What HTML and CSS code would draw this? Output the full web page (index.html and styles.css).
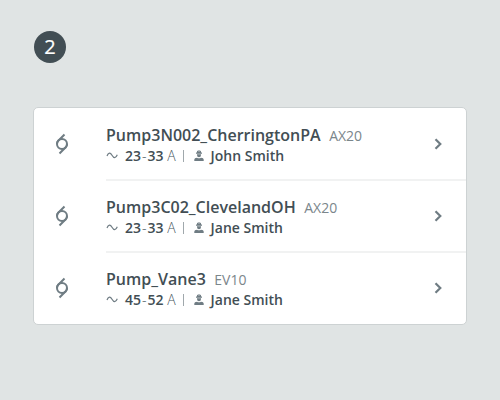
FILE: index.html
```html
<!DOCTYPE html>
<html lang="en">
<head>
<meta charset="utf-8">
<title>Pumps</title>
<link rel="stylesheet" href="styles.css">
</head>
<body>
<svg width="0" height="0" class="defs">
  <symbol id="pump" viewBox="0 0 24 24"><circle cx="12" cy="12" r="5"/><path d="M7 12Q7 10 8.300 8.700L14.500 2.500M17 12Q17 14 15.700 15.300L9.500 21.500"/></symbol>
  <symbol id="wave" viewBox="0 0 12 12"><path d="M1 6C2.300 2.200 4.300 2.200 6 5.200S9.700 8.800 11.300 4.800"/></symbol>
  <symbol id="user" viewBox="0 0 12 12"><path d="M4 1.200L5 .5V1.500H5.500V0H6.500V1.500H7V.5L8 1.200V2.500H9V3.700H3V2.500H4ZM4 4.200H8V5A2 2.200 0 0 1 4 5ZM1.300 11V9.500Q1.300 8 4 7.700Q6 9 8 7.700Q10.700 8 10.700 9.500V11Z"/></symbol>
  <symbol id="chev" viewBox="0 0 12 12"><path d="M3.500 1.200L8.300 6L3.500 10.800"/></symbol>
</svg>
<div class="step">2</div>
<ul class="list">
  <li class="row"><svg class="pump"><use href="#pump"/></svg><div class="body"><div class="info"><div class="title">Pump3N002_CherringtonPA<span class="model">AX20</span></div><div class="meta"><svg class="wave"><use href="#wave"/></svg><span class="range"><b>23</b><span class="dash">-</span><b>33</b> A</span><i class="bar"></i><svg class="user"><use href="#user"/></svg><span class="name">John Smith</span></div></div><svg class="chev"><use href="#chev"/></svg></div></li>
  <li class="row"><svg class="pump"><use href="#pump"/></svg><div class="body"><div class="info"><div class="title">Pump3C02_ClevelandOH<span class="model">AX20</span></div><div class="meta"><svg class="wave"><use href="#wave"/></svg><span class="range"><b>23</b><span class="dash">-</span><b>33</b> A</span><i class="bar"></i><svg class="user"><use href="#user"/></svg><span class="name">Jane Smith</span></div></div><svg class="chev"><use href="#chev"/></svg></div></li>
  <li class="row"><svg class="pump"><use href="#pump"/></svg><div class="body"><div class="info"><div class="title">Pump_Vane3<span class="model">EV10</span></div><div class="meta"><svg class="wave"><use href="#wave"/></svg><span class="range"><b>45</b><span class="dash">-</span><b>52</b> A</span><i class="bar"></i><svg class="user"><use href="#user"/></svg><span class="name">Jane Smith</span></div></div><svg class="chev"><use href="#chev"/></svg></div></li>
</ul>
</body>
</html>
```
FILE: styles.css
```css
* { box-sizing: border-box; }
body { margin: 0; padding: 31px 33px; height: 400px; background: #e0e4e4; font-family: "Open Sans", sans-serif; color: #424e54; }
.defs { display: none; }
.step { width: 32px; height: 32px; margin-left: 1px; border-radius: 50%; background: #424e54; color: #fff; font-size: 20px; font-weight: 500; line-height: 32px; text-align: center; -webkit-text-stroke: .2px #fff; }
.list { list-style: none; margin: 44px 0 0; padding: 0; width: 434px; height: 218px; background: #fff; border: 1px solid #cdd2d3; border-radius: 5px; }
.row { display: flex; align-items: center; height: 72px; }
.pump { width: 24px; height: 24px; margin: 0 32px 0 16px; fill: none; stroke: #6f7c83; stroke-width: 2; }
.body { flex: 1; height: 72px; display: flex; align-items: center; justify-content: space-between; padding-right: 22px; box-shadow: 0 1px #f1f2f2, inset 0 -1px #f1f2f2; }
.row:last-child .body { box-shadow: none; }
.info { padding-top: 2px; }
.title { font-size: 16px; font-weight: 600; line-height: 22px; white-space: nowrap; }
.model { margin-left: 8.500px; font-size: 14px; font-weight: 400; color: #7b868b; }
.meta { display: flex; align-items: center; margin: -1px 0 1px; font-size: 14px; line-height: 20px; white-space: nowrap; }
.wave, .user, .chev { width: 12px; height: 12px; }
.wave { fill: none; stroke: #6f7c83; stroke-width: 1.2; margin-right: 7px; }
.range { color: #46545b; font-weight: 300; }
.dash { margin: 0 1px; }
.range b, .name { font-weight: 600; color: #424e54; }
.bar { width: 1px; height: 12px; margin: 0 9px 0 7px; background: #a0a8ac; }
.user { fill: #6f7c83; margin-right: 6px; }
.chev { fill: none; stroke: #6f7c83; stroke-width: 2.2; }
```
